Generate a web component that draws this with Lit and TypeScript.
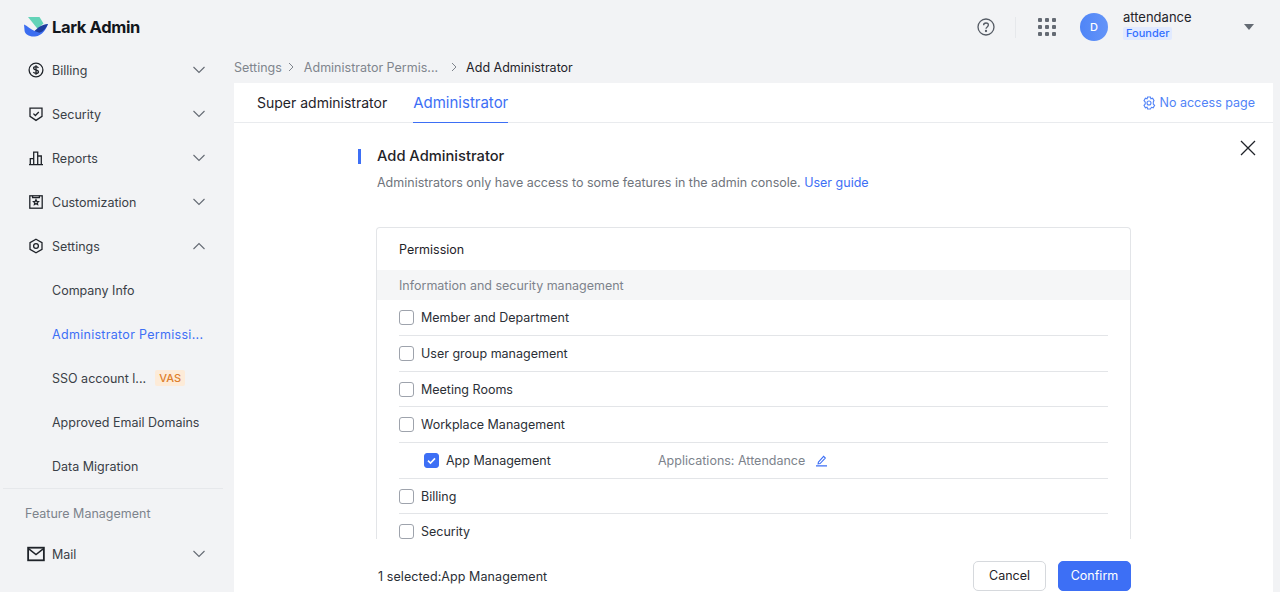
import { LitElement, html, css, svg } from "lit";
import { customElement } from "lit/decorators.js";

const chevron = (up = false) => html`<svg class="chev" viewBox="0 0 14 8" fill="none" stroke="#646a73" stroke-width="1.1">
  <path d=${up ? "M1.5 7 7 1.6 12.5 7" : "M1.5 1 7 6.4 12.5 1"}></path></svg>`;

const icons: Record<string, any> = {
  billing: svg`<circle cx="8" cy="8" r="6.9"/><path d="M10.4 5.9C10 5 9.1 4.6 8 4.6c-1.3 0-2.4.6-2.4 1.7 0 2.4 4.9 1 4.9 3.4 0 1.1-1.1 1.7-2.5 1.7-1.2 0-2.2-.5-2.6-1.4M8 3.2v9.6"/>`,
  security: svg`<path d="M2 2.2h12v8.2L8 14.4 2 10.4z"/><path d="M5.4 7.6 7.4 9.5 10.8 6"/>`,
  reports: svg`<path d="M1 14.6h14M2.3 14.4V8.6h3.4v5.8M5.7 14.4V2.2h4v12.2M9.7 14.4V6h3.6v8.4"/>`,
  custom: svg`<rect x="1.8" y="1.8" width="12.4" height="12.4"/><path d="M4.6 1.8v1.8h6.8V1.8M8 5.8l.8 1.6 1.7.2-1.2 1.2.3 1.7L8 9.7l-1.6.8.3-1.7-1.2-1.2 1.7-.2z"/>`,
  settings: svg`<path d="M8 1.2 14 4.6v6.8L8 14.8 2 11.4V4.6z"/><circle cx="8" cy="8" r="2.4"/>`,
  mail: svg`<rect x="1" y="2.4" width="14" height="11.2" stroke-width="1.6"/><path d="M1.6 3.4 8 8.6l6.4-5.2"/>`,
};
const navIcon = (k: string) => html`<svg class="nav-ic" viewBox="0 0 16 16" fill="none" stroke="#1f2329" stroke-width="1.3">${icons[k]}</svg>`;

@customElement("app-root")
export class AppRoot extends LitElement {
  static styles = css`
    :host { display: block; width: 1280px; height: 592px; overflow: hidden; background: #f2f3f5; color: #1f2329;
      font-family: Inter, "Noto Sans", sans-serif; font-size: 12.5px; }
    * { box-sizing: border-box; }
    .top { height: 48px; display: flex; align-items: center; padding: 6px 0 0 24px; }
    .logo { display: flex; align-items: center; gap: 4px; font-size: 16.5px; font-weight: 700; color: #12161c; letter-spacing: -.35px; }
    .logo svg { width: 24px; height: 20px; }
    .spacer { flex: 1; }
    .help { width: 18px; height: 18px; margin-right: 20px; }
    .vsep { width: 1px; height: 21px; background: #e6e8eb; margin-right: 22px; }
    .apps { width: 18px; height: 18px; display: grid; grid-template-columns: repeat(3, 4px); gap: 3px; margin-right: 24px; }
    .apps i { width: 4px; height: 4px; background: #646a73; border-radius: 1px; }
    .avatar { width: 28px; height: 28px; border-radius: 50%; background: linear-gradient(90deg, #4f85f7, #6494f8); color: #fff; font-size: 11px; font-weight: 500;
      display: flex; align-items: center; justify-content: center; margin-right: 15px; }
    .user { width: 121px; display: flex; flex-direction: column; align-items: flex-start; gap: 2px; margin-top: -6px; }
    .user .name { font-size: 13px; line-height: 16px; color: #1f2329; }
    .tag { font-size: 11px; line-height: 13px; padding: 0 3px; border-radius: 2px; background: #e1eaff; color: #3370ff; font-weight: 500; }
    .caret { width: 0; height: 0; border-left: 5px solid transparent; border-right: 5px solid transparent; border-top: 6px solid #646a73; margin-right: 26px; }

    .body { display: flex; height: 544px; }
    .side { width: 234px; flex: none; }
    .item { height: 44px; display: flex; align-items: center; padding: 0 28px 0 28px; color: #3a3f47; }
    .item.sub { padding-left: 52px; }
    .item.active { color: #3d6ff5; letter-spacing: .3px; }
    .nav-ic { width: 16px; height: 16px; margin-right: 8px; flex: none; }
    .grow { flex: 1; white-space: nowrap; }
    .chev { width: 14px; height: 8px; flex: none; }
    .vas { font-size: 11px; line-height: 16px; padding: 0 4px; margin-left: 9px; background: #fdebd8; color: #dd7f2c; border-radius: 2px; font-weight: 500; }
    .divider { height: 1px; background: #e6e8eb; margin: 0 11px 0 3px; }
    .group { height: 48px; padding: 16px 0 0 25px; line-height: 17px; color: #7d838c; }
    .item.mail { height: 34px; }
    .nav-ic.wide { width: 18px; height: 18px; margin: 0 7px 0 -1px; }

    .main { flex: 1; display: flex; flex-direction: column; padding-right: 7px; min-width: 0; }
    .crumbs { height: 35px; display: flex; align-items: center; color: #80858d; flex: none; padding-top: 3px; }
    .crumbs b { font-weight: 400; color: #1f2329; }
    .crumbs svg { width: 6px; height: 10px; margin: 0 10px 0 6px; }
    .crumbs svg.far { margin: 0 9px 0 13px; }
    .card { flex: 1; background: #fff; position: relative; min-height: 0; }
    .tabs { height: 40px; display: flex; align-items: stretch; padding-left: 23px; border-bottom: 1.5px solid #e9ebee; }
    .tab { font-size: 14px; line-height: 39px; margin-right: 26px; color: #1f2329; position: relative; }
    .tab.on { font-size: 15px; color: #3d6ff5; border-bottom: 1.5px solid #3d6ff5; height: 40px; }
    .noaccess { margin-left: auto; display: flex; align-items: center; gap: 4px; color: #5183f7; padding-right: 18px; }
    .noaccess svg { width: 14px; height: 14px; }
    .close { position: absolute; left: 1006px; top: 57px; width: 16px; height: 16px; }
    .panel { width: 773px; margin-left: 124px; }
    .title { margin-top: 25px; height: 16px; display: flex; align-items: center; gap: 16px; font-size: 14.7px; font-weight: 450; color: #1f2329; }
    .title::before { content: ""; width: 3px; height: 15px; background: #3d6ff5; }
    .desc { margin: 9px 0 0 19px; line-height: 20px; color: #6f747c; }
    .desc a { color: #3d6ff5; }
    .table { margin: 34px 0 0 18px; height: 312px; overflow: hidden; border: 1px solid #e3e5e8; border-bottom: 0; border-radius: 4px 4px 0 0; }
    .thead { height: 42px; padding-left: 22px; display: flex; align-items: center; color: #1f2329; }
    .band { height: 30.3px; background: #f5f6f7; padding: 1px 0 0 22px; line-height: 30px; color: #7d838c; }
    .rows { margin: 0 22px; }
    .row { height: 35.7px; display: flex; align-items: center; border-bottom: 1px solid #e3e5e8; gap: 7px; color: #2b2f36; }
    .row.child { padding-left: 25px; }
    .box { width: 15px; height: 15px; border: 1px solid #9ea3ac; border-radius: 3px; flex: none; background: #fff; display: flex; }
    .box.on { background: #3d6ff5; border-color: #3d6ff5; }
    .box svg { width: 13px; height: 13px; }
    .lbl { width: 205px; }
    .apps-note { color: #7d838c; }
    .pen { width: 13px; height: 13px; margin-left: 3px; }
    .foot { margin: 21px 0 0 20px; height: 31px; display: flex; align-items: center; gap: 12px; color: #2b2f36; }
    .foot span { flex: 1; padding-top: 2px; letter-spacing: .08px; }
    .btn { width: 73px; height: 30px; border-radius: 5px; border: 1px solid #d6d9dd; background: #fff; color: #1f2329; font: inherit; padding: 0; }
    .btn.primary { background: #3d6ff5; border-color: #3d6ff5; color: #fff; }
  `;

  private row(label: string) {
    return html`<div class="row"><span class="box"></span><span>${label}</span></div>`;
  }

  render() {
    return html`
      <div class="top">
        <div class="logo">
          <svg viewBox="0 0 24 20">
            <path d="M4 0h11.5l4 6.5-6 5.3z" fill="#63d3b8"></path>
            <path d="M0 7.5c3 1.2 7 5 10.5 6.6 4-1 6.5-4 13.5-7.1-2.2 5.2-5 11.5-13 12.5C5 20 1 17 .6 14z" fill="#3b6df0"></path>
            <path d="M10.5 14.1c3.5-3.6 7.5-6.8 13.5-7.1-2 4.2-4.3 7.3-8.6 8.8z" fill="#1d3e9e"></path>
          </svg>
          <span>Lark Admin</span>
        </div>
        <div class="spacer"></div>
        <svg class="help" viewBox="0 0 18 18" fill="none" stroke="#555b64" stroke-width="1.3"><circle cx="9" cy="9" r="8"></circle>
          <path d="M6.6 7.2C6.6 5.8 7.7 5 9 5s2.4.9 2.4 2.1c0 1.8-2.4 1.8-2.4 3.6"></path><circle cx="9" cy="13" r=".5" fill="#555b64"></circle></svg>
        <div class="vsep"></div>
        <div class="apps">${Array.from({ length: 9 }, () => html`<i></i>`)}</div>
        <div class="avatar">D</div>
        <div class="user"><span class="name">attendance</span><span class="tag">Founder</span></div>
        <div class="caret"></div>
      </div>
      <div class="body">
        <nav class="side">
          <div class="item">${navIcon("billing")}<span class="grow">Billing</span>${chevron()}</div>
          <div class="item">${navIcon("security")}<span class="grow">Security</span>${chevron()}</div>
          <div class="item">${navIcon("reports")}<span class="grow">Reports</span>${chevron()}</div>
          <div class="item">${navIcon("custom")}<span class="grow">Customization</span>${chevron()}</div>
          <div class="item">${navIcon("settings")}<span class="grow">Settings</span>${chevron(true)}</div>
          <div class="item sub"><span class="grow">Company Info</span></div>
          <div class="item sub active"><span class="grow">Administrator Permissi...</span></div>
          <div class="item sub"><span>SSO account l...</span><span class="vas">VAS</span></div>
          <div class="item sub"><span class="grow">Approved Email Domains</span></div>
          <div class="item sub"><span class="grow">Data Migration</span></div>
          <div class="divider"></div>
          <div class="group">Feature Management</div>
          <div class="item mail"><svg class="nav-ic wide" viewBox="0 0 16 16" fill="none" stroke="#1f2329" stroke-width="1.3">${icons.mail}</svg><span class="grow">Mail</span>${chevron()}</div>
        </nav>
        <main class="main">
          <div class="crumbs">
            <span>Settings</span>
            <svg viewBox="0 0 6 10" fill="none" stroke="#80858d"><path d="M1 1l4 4-4 4"></path></svg>
            <span>Administrator Permis...</span>
            <svg class="far" viewBox="0 0 6 10" fill="none" stroke="#80858d"><path d="M1 1l4 4-4 4"></path></svg>
            <b>Add Administrator</b>
          </div>
          <section class="card">
            <div class="tabs">
              <div class="tab">Super administrator</div>
              <div class="tab on">Administrator</div>
              <div class="noaccess">
                <svg viewBox="0 0 14 14" fill="none" stroke="#5183f7" stroke-width="1.1"><path d="M5.6 1h2.8l.5 1.7 1.7-.5 1.4 2.4L11.3 6v2l1.3 1.4-1.4 2.4-1.7-.5L8.4 13H5.6l-.5-1.7-1.7.5L2 9.4 3.2 8V6L2 4.6l1.4-2.4 1.7.5z"></path><circle cx="7" cy="7" r="2"></circle></svg>
                <span>No access page</span>
              </div>
            </div>
            <svg class="close" viewBox="0 0 16 16" fill="none" stroke="#1f2329" stroke-width="1.3"><path d="M1 1l14 14M15 1 1 15"></path></svg>
            <div class="panel">
              <div class="title">Add Administrator</div>
              <div class="desc">Administrators only have access to some features in the admin console. <a>User guide</a></div>
              <div class="table">
                <div class="thead">Permission</div>
                <div class="band">Information and security management</div>
                <div class="rows">
                  ${this.row("Member and Department")}
                  ${this.row("User group management")}
                  ${this.row("Meeting Rooms")}
                  ${this.row("Workplace Management")}
                  <div class="row child">
                    <span class="box on"><svg viewBox="0 0 13 13" fill="none" stroke="#fff" stroke-width="1.6"><path d="M3 6.6l2.5 2.4L10 4.4"></path></svg></span>
                    <span class="lbl">App Management</span>
                    <span class="apps-note">Applications: Attendance</span>
                    <svg class="pen" viewBox="0 0 13 13" fill="none" stroke="#3d6ff5" stroke-width="1.1"><path d="M3.4 8.2 8.6 2.4l1.7 1.6-5.2 5.6-2 .3zM1 11.9h11"></path></svg>
                  </div>
                  ${this.row("Billing")}
                  ${this.row("Security")}
                </div>
              </div>
              <div class="foot">
                <span>1 selected:App Management</span>
                <button class="btn">Cancel</button>
                <button class="btn primary">Confirm</button>
              </div>
            </div>
          </section>
        </main>
      </div>
    `;
  }
}
